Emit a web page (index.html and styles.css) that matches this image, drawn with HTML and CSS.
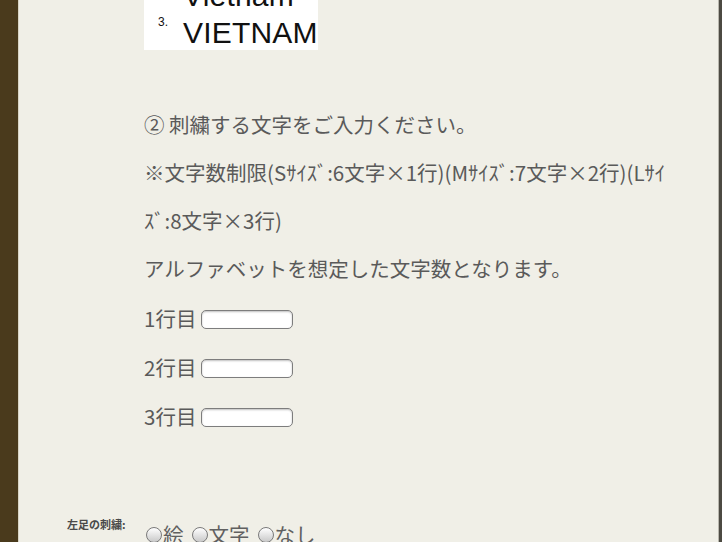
FILE: index.html
```
<!DOCTYPE html>
<html lang="ja">
<head>
<meta charset="utf-8">
<link rel="stylesheet" href="styles.css">
</head>
<body>
<div class="page">
  <div class="bar-left"></div>
  <main class="main">
    <div class="content">
      <div class="sample">
        <div class="sample-row first"><span class="marker"></span><span class="word">Vietnam</span></div>
        <div class="sample-row"><span class="marker">3.</span><span class="word">VIETNAM</span></div>
      </div>
      <div class="text">
        <p class="line">② 刺繍する文字をご入力ください。</p>
        <p class="line">※文字数制限(Sｻｲｽﾞ:6文字×1行)(Mｻｲｽﾞ:7文字×2行)(Lｻｲ<br>ｽﾞ:8文字×3行)</p>
        <p class="line">アルファベットを想定した文字数となります。</p>
        <div class="field"><label>1行目</label><input type="text" class="box"></div>
        <div class="field"><label>2行目</label><input type="text" class="box"></div>
        <div class="field"><label>3行目</label><input type="text" class="box"></div>
      </div>
    </div>
    <div class="option">
      <div class="opt-label">左足の刺繍:</div>
      <div class="opt-choices">
        <label class="choice"><input type="radio" name="left" class="radio">絵</label>
        <label class="choice"><input type="radio" name="left" class="radio">文字</label>
        <label class="choice"><input type="radio" name="left" class="radio">なし</label>
      </div>
    </div>
  </main>
  <div class="bar-right"></div>
</div>
</body>
</html>
```
FILE: styles.css
```
html, body {
  margin: 0;
  padding: 0;
  height: 100%;
  overflow: hidden;
}
body {
  background: #f0efe7;
  font-family: "Noto Sans CJK JP", "Noto Sans", sans-serif;
  color: #5a5a5a;
}
.page {
  display: flex;
  height: 542px;
}
.bar-left {
  width: 18px;
  flex: none;
  background: #4a3a1c;
  border-right: 1px solid #d8d4c4;
}
.bar-right {
  width: 3px;
  flex: none;
  background: #4c4a42;
  border-left: 1px solid #b8b6ad;
}
.main {
  flex: 1;
  display: flex;
  flex-direction: column;
}
.content {
  padding-left: 125px;
}
.sample {
  width: 174px;
  height: 50px;
  background: #ffffff;
  overflow: hidden;
  font-family: "Liberation Sans", Arial, sans-serif;
  color: #111;
}
.sample-row {
  display: flex;
  align-items: flex-start;
  height: 37px;
  line-height: 37px;
}
.sample-row.first {
  margin-top: -23px;
}
.marker {
  width: 25px;
  padding-left: 14px;
  font-size: 12px;
  line-height: 16px;
  flex: none;
}
.word {
  font-size: 30px;
  letter-spacing: 0.2px;
}
.text {
  padding-top: 50px;
}
.line {
  margin: 0;
  font-size: 20.5px;
  line-height: 48px;
  white-space: nowrap;
}
.field {
  display: flex;
  align-items: center;
  height: 49px;
  font-size: 20.5px;
}
.field:first-of-type {
  margin-top: 1px;
}
.field label {
  width: 57px;
}
.box {
  width: 92px;
  height: 19px;
  box-sizing: border-box;
  margin: 3px 0 0 0;
  padding: 0;
  border: 1.5px solid #7d7d7d;
  border-radius: 5px;
  background: #fff;
  box-shadow: inset 0 1px 2px rgba(0,0,0,0.25);
}
.option {
  display: flex;
  margin-top: 74px;
  padding-left: 48px;
}
.opt-label {
  width: 79px;
  font-size: 11px;
  font-weight: bold;
  color: #4a4a4a;
  padding-top: 2px;
}
.opt-choices {
  display: flex;
  gap: 8px;
  font-size: 20.5px;
  line-height: 24px;
  padding-top: 8px;
  color: #606060;
}
.choice {
  display: flex;
  align-items: center;
}
.radio {
  appearance: none;
  -webkit-appearance: none;
  width: 16px;
  height: 16px;
  margin: 2px 1px 0 0;
  border: 1px solid #7a7a7a;
  border-radius: 50%;
  background: linear-gradient(#ffffff, #c8c8c8);
}
```
